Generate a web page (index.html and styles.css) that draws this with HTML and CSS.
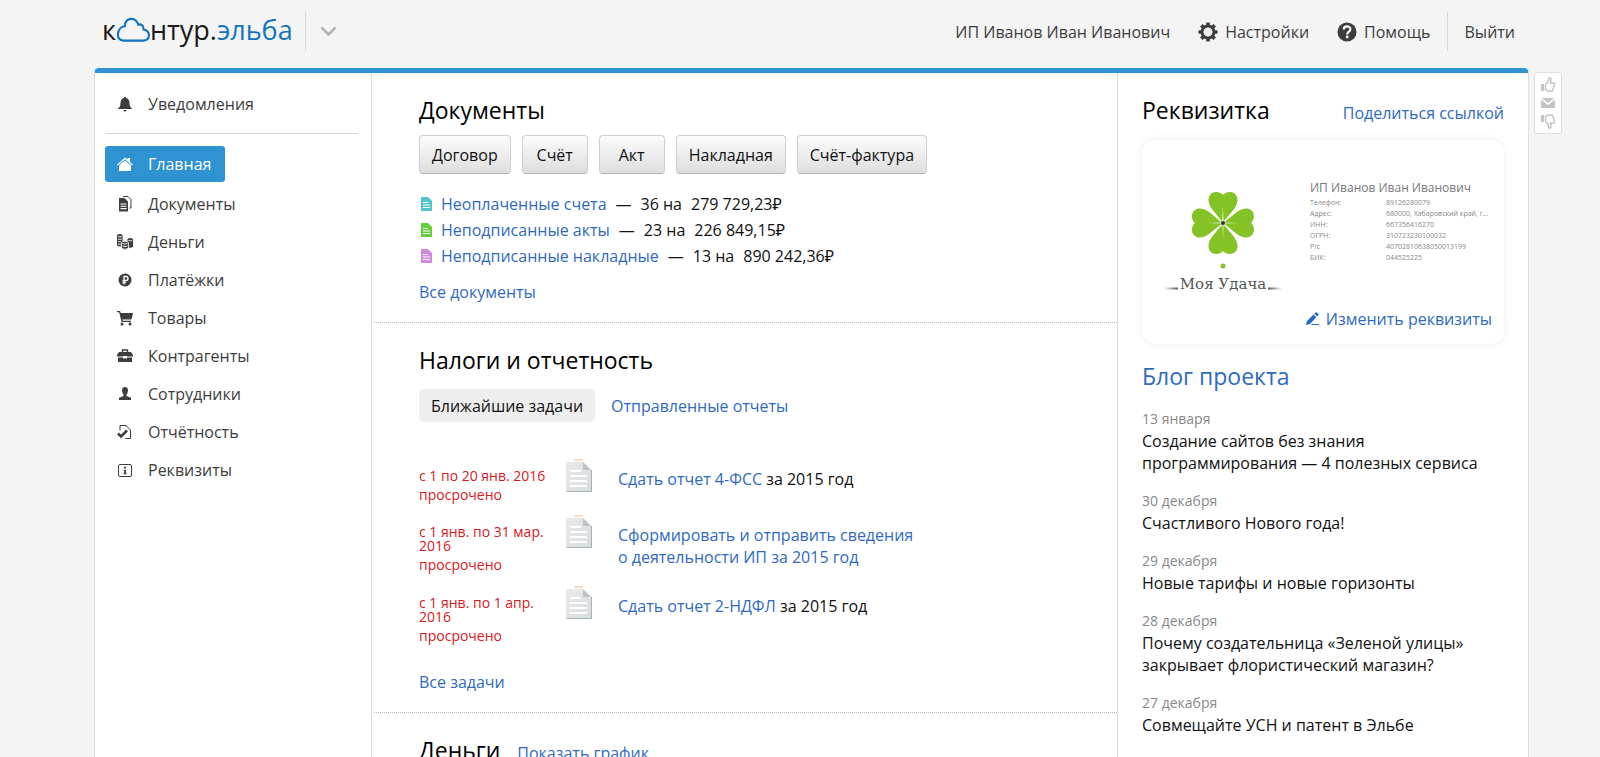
FILE: index.html
```html
<!DOCTYPE html>
<html lang="ru">
<head>
<meta charset="utf-8">
<title>Контур.Эльба</title>
<link rel="stylesheet" href="styles.css">
</head>
<body>
<svg class="defs" aria-hidden="true">
  <symbol id="sheet" viewBox="0 0 11 14"><path d="M0 0h7l4 4v10H0z"/><path d="M2 5.500h5M2 8h7M2 10.500h7" stroke="#fff" stroke-width="1.200"/></symbol>
  <linearGradient id="paper" x1="0" y1="0" x2="1" y2="1"><stop offset="0" stop-color="#e8eaeb"/><stop offset="1" stop-color="#d9dddf"/></linearGradient>
  <symbol id="page" viewBox="0 0 26 34"><path d="M8 1h9" stroke="#f3dccb" stroke-width="2"/><path d="M0 3h17l8 8v21H0z" fill="url(#paper)"/><path d="M.5 32.500h25V11" fill="none" stroke="#a9b2b6" stroke-width="1.200"/><path d="M17 3l8 8h-8z" fill="#bcc4c7"/><path d="M4 12h11M4 17h17M4 22h17M4 27h17" stroke="#fff" stroke-width="2"/></symbol>
  <symbol id="thumb" viewBox="0 0 14 16"><path d="M0 7h3v7H0z" fill="#c4c4c4"/><path d="M4.500 7.500L7 5l1-4q2-.5 2 2l-.5 3H13q.8 1 0 2.500l-1 4-1 1.500H7l-2.500-1.500z" fill="#fff" stroke="#c4c4c4" stroke-width="1.500"/></symbol>
</svg>

<header class="top">
  <a class="logo" href="#"><span>к</span><svg class="cloud" viewBox="0 0 32 24"><path d="M7 22h18.500c7 0 7.500-9 .5-10.500C26 7.500 23.500 6 21 7 18.500-.5 9-.5 8.200 8.500 1 9-1 22 7 22z" fill="none" stroke="#1173c0" stroke-width="2"/></svg><span>нтур.</span><span class="logo-blue">эльба</span></a>
  <button class="services" aria-label="Сервисы"><svg width="17" height="11" viewBox="0 0 17 11"><path d="M1.500 1.500l7 7 7-7" fill="none" stroke="#b3b3b3" stroke-width="2.500"/></svg></button>
  <nav class="account">
    <a href="#">ИП Иванов Иван Иванович</a>
    <a href="#"><svg width="20" height="20" viewBox="0 0 20 20"><circle cx="10" cy="10" r="6" fill="none" stroke="#3d3d3d" stroke-width="3"/><path d="M10 .5v3M10 16.500v3M.5 10h3M16.500 10h3M3.300 3.300l2 2M14.700 14.700l2 2M3.300 16.700l2-2M14.700 5.300l2-2" stroke="#3d3d3d" stroke-width="3.600"/></svg>Настройки</a>
    <a href="#"><svg width="20" height="20" viewBox="0 0 20 20"><circle cx="10" cy="10" r="9.500" fill="#3d3d3d"/><path d="M6.800 7.500c0-4 6.600-4 6.600-.3 0 2.500-3.200 2.300-3.200 5.300" fill="none" stroke="#fff" stroke-width="2.200"/><circle cx="10.200" cy="15" r="1.400" fill="#fff"/></svg>Помощь</a>
    <a class="exit" href="#">Выйти</a>
  </nav>
</header>

<div class="shell">
<div class="panel">
  <nav class="side">
    <div class="side-head"><a href="#"><svg viewBox="0 0 16 16"><path d="M8 1q1.200 0 1.200 1Q12.500 3 12.500 7q0 4 2.500 5.500v.5H1v-.5Q3.500 11 3.500 7q0-4 3.300-5Q6.800 1 8 1zM6.300 14h3.400Q9.500 15.500 8 15.500T6.300 14z"/></svg>Уведомления</a></div>
    <ul>
      <li><a class="current" href="#"><svg viewBox="0 0 16 16"><path d="M8 1.500l2.500 2.300V2H13v4l3 2.700-.8.8L8 3.300.8 9.500 0 8.700z"/><path d="M8 4.600l6 5V15H2V9.600z"/></svg>Главная</a></li>
      <li><a href="#"><svg viewBox="0 0 16 16"><path d="M6 .5h5l3 3V12h-1.500" fill="none" stroke="#3d3d3d"/><path d="M2 2h5.500L11 5.500V15.500H2z"/><path d="M3.500 8h6M3.500 10.300h6M3.500 12.600h6" stroke="#fff" stroke-width="1.100"/></svg>Документы</a></li>
      <li><a href="#"><svg viewBox="0 0 16 16"><path d="M0 1.500Q0 0 2.800 0t2.800 1.500v10q-2.500 2-5.600 0zM10.400 5.500q0-1.500 2.800-1.500T16 5.500v7.500q-2.800 1.500-5.600 0z"/><path d="M4.500 9q0-1.800 3.500-1.800T11.500 9v5.200q-3.500 2.400-7 0z" stroke="#fff" stroke-width=".8"/><path d="M1 2.500q2 .8 3.800 0M1 5q2 .8 3.800 0M1 7.500q2 .8 3 0M1 10q2 .8 3 0M5.500 9.500q2.500 1.200 5 0M5.500 12q2.500 1.200 5 0M11.500 6.500q2 .8 3.500 0" fill="none" stroke="#fff" stroke-width=".9"/></svg>Деньги</a></li>
      <li><a href="#"><svg viewBox="0 0 16 16"><circle cx="8" cy="8" r="6.500"/><path d="M7 12.500V4.500h2q2 0 2 2t-2 2H5.500M5.500 10.500H9" fill="none" stroke="#fff" stroke-width="1.300"/></svg>Платёжки</a></li>
      <li><a href="#"><svg viewBox="0 0 16 16"><path d="M0 1h3l.7 2H16l-1.500 6.500H5.300l.4 1.300H14V12H4.500L2.200 2.300H0z"/><circle cx="5" cy="14" r="1.500"/><circle cx="13" cy="14" r="1.500"/></svg>Товары</a></li>
      <li><a href="#"><svg viewBox="0 0 16 16"><path d="M5.500 4V2h5v2" fill="none" stroke="#3d3d3d" stroke-width="1.400"/><path d="M2 4h12l2 3v1.500H10V8H6v.5H0V7zM1 9.500h5v1h4v-1h5V14H1z"/></svg>Контрагенты</a></li>
      <li><a href="#"><svg viewBox="0 0 16 16"><path d="M8 1q3 0 3 3.500 0 2-1.500 4V10l4.500 1.700V14H2v-2.300L6.500 10V8.500Q5 6.500 5 4.500 5 1 8 1z"/></svg>Сотрудники</a></li>
      <li><a href="#"><svg viewBox="0 0 16 16"><path d="M3 6.500V1.500h6l4.500 4.500v8.500H8.500M9 1.500v1" fill="none" stroke="#3d3d3d"/><path d="M1 9.500l3 3 6-6" fill="none" stroke="#3d3d3d" stroke-width="2.500"/></svg>Отчётность</a></li>
      <li><a href="#"><svg viewBox="0 0 16 16"><rect x="1.500" y="2.500" width="13" height="12" rx="1.500" fill="none" stroke="#3d3d3d"/><path d="M7 4.800h2v1.700H7zM6.500 7.700H9v3.500h.8v1H6.500v-1h.8V8.700h-.8z"/></svg>Реквизиты</a></li>
    </ul>
  </nav>

  <main>
    <section>
      <h2>Документы</h2>
      <div class="buttons"><button>Договор</button><button>Счёт</button><button>Акт</button><button>Накладная</button><button>Счёт-фактура</button></div>
      <ul class="docs">
        <li><svg fill="#53c6cd"><use href="#sheet"/></svg><a href="#">Неоплаченные счета</a><span>—</span><span>36 на</span><span>279 729,23₽</span></li>
        <li><svg fill="#65cf3b"><use href="#sheet"/></svg><a href="#">Неподписанные акты</a><span>—</span><span>23 на</span><span>226 849,15₽</span></li>
        <li><svg fill="#cf8ae0"><use href="#sheet"/></svg><a href="#">Неподписанные накладные</a><span>—</span><span>13 на</span><span>890 242,36₽</span></li>
      </ul>
      <a href="#">Все документы</a>
    </section>
    <section class="taxes">
      <h2>Налоги и отчетность</h2>
      <div class="tabs"><button class="active">Ближайшие задачи</button><button>Отправленные отчеты</button></div>
      <ul class="tasks">
        <li><div class="due"><p>с 1 по 20 янв. 2016</p><p>просрочено</p></div><svg><use href="#page"/></svg><p class="task"><a href="#">Сдать отчет 4-ФСС</a> за 2015 год</p></li>
        <li><div class="due"><p>с 1 янв. по 31 мар. 2016</p><p>просрочено</p></div><svg><use href="#page"/></svg><p class="task"><a href="#">Сформировать и отправить сведения о деятельности ИП за 2015 год</a></p></li>
        <li><div class="due"><p>с 1 янв. по 1 апр. 2016</p><p>просрочено</p></div><svg><use href="#page"/></svg><p class="task"><a href="#">Сдать отчет 2-НДФЛ</a> за 2015 год</p></li>
      </ul>
      <a href="#">Все задачи</a>
    </section>
    <section class="money">
      <h2>Деньги</h2><a href="#">Показать график</a>
    </section>
  </main>

  <aside>
    <div class="aside-head"><h2>Реквизитка</h2><a href="#">Поделиться ссылкой</a></div>
    <div class="card">
      <div class="card-body">
        <svg class="clover" viewBox="0 0 118 104">
          <defs>
            <path id="leaf" d="M59 34C55 25 44.500 19 44.500 10 44.500 1 55 0 59 5 63 0 73.500 1 73.500 10 73.500 19 63 25 59 34z"/>
            <linearGradient id="fade"><stop offset="0" stop-color="#555" stop-opacity="0"/><stop offset="1" stop-color="#555"/></linearGradient>
            <linearGradient id="fade2"><stop offset="0" stop-color="#555"/><stop offset="1" stop-color="#555" stop-opacity="0"/></linearGradient>
          </defs>
          <g fill="#84c225"><use href="#leaf"/><use href="#leaf" transform="rotate(90 59 33)"/><use href="#leaf" transform="rotate(180 59 33)"/><use href="#leaf" transform="rotate(270 59 33)"/><circle cx="59" cy="76" r="2.500"/></g>
          <path d="M58.500 17l.5 14 .5-14v14l6-5-5 6.500 14 .5-14 .5 5 6.500-6-5v14l-.5-14-.5 14V35l-6 5 5-6.500L43 33l14-.5-5-6.500 6 5z" fill="#e9f6d4"/>
          <circle cx="59" cy="33" r="2" fill="#333"/>
          <rect y="97.500" width="14" height="2" fill="url(#fade)"/><rect x="104" y="97.500" width="14" height="2" fill="url(#fade2)"/>
          <text x="59" y="99" text-anchor="middle" class="brand">Моя Удача</text>
        </svg>
        <div class="info">
          <p class="owner">ИП Иванов Иван Иванович</p>
          <dl><dt>Телефон:</dt><dd>89126280079</dd><dt>Адрес:</dt><dd>680000, Хабаровский край, г…</dd><dt>ИНН:</dt><dd>667356416270</dd><dt>ОГРН:</dt><dd>310723230100032</dd><dt>Р/с</dt><dd>40702810638050013199</dd><dt>БИК:</dt><dd>044525225</dd></dl>
        </div>
      </div>
      <a class="edit" href="#"><svg width="14" height="14" viewBox="0 0 14 14" fill="#2268c4"><path d="M0 13l1-4 6.500-6.500 2.800 2.800L4 12zM8.300 1.700L9.700.5q.6-.5 1.200 0L12.300 2q.5.600 0 1.200L11 4.500zM6 12h7v1H5z"/></svg>Изменить реквизиты</a>
    </div>
    <h2><a href="#">Блог проекта</a></h2>
    <ul class="blog">
      <li><time>13 января</time><a href="#">Создание сайтов без знания программирования — 4 полезных сервиса</a></li>
      <li><time>30 декабря</time><a href="#">Счастливого Нового года!</a></li>
      <li><time>29 декабря</time><a href="#">Новые тарифы и новые горизонты</a></li>
      <li><time>28 декабря</time><a href="#">Почему создательница «Зеленой улицы» закрывает флористический магазин?</a></li>
      <li><time>27 декабря</time><a href="#">Совмещайте УСН и патент в Эльбе</a></li>
    </ul>
  </aside>
</div>
<div class="feedback">
  <button aria-label="Нравится"><svg width="16" height="16"><use href="#thumb"/></svg></button>
  <button aria-label="Написать"><svg width="14" height="10" viewBox="0 0 14 10"><path d="M0 0h14v10H0z" fill="#c4c4c4"/><path d="M0 .5l7 5.500 7-5.500" fill="none" stroke="#fff" stroke-width="1.500"/></svg></button>
  <button aria-label="Не нравится"><svg class="down" width="16" height="16"><use href="#thumb"/></svg></button>
</div>
</div>
</body>
</html>
```
FILE: styles.css
```css
* { box-sizing: border-box; }
html { height: 100%; overflow: hidden; }
body {
  height: 100%;
  margin: 0;
  overflow: hidden;
  display: flex;
  flex-direction: column;
  background: #f4f4f4;
  color: #111;
  font: 16px/22px "Open Sans", "Noto Sans", sans-serif;
}
h2, p, ul, dl, dd { margin: 0; padding: 0; }
ul { list-style: none; }
a { color: #2f6abf; text-decoration: none; }
button { margin: 0; padding: 0; border: 0; background: none; font: inherit; color: inherit; cursor: pointer; }
h2 { font-size: 23px; line-height: 32px; font-weight: 400; color: #000; }
svg { flex: none; display: block; }
.defs { position: absolute; width: 0; height: 0; }

.top { flex: none; display: flex; align-items: center; height: 68px; padding: 0 85px 5px 102px; }
.logo { display: flex; align-items: center; padding-bottom: 4px; font-size: 27px; line-height: 36px; color: #1a1a1a; }
.cloud { width: 34px; height: 26px; }
.logo-blue { color: #1173c0; }
.services { display: flex; align-items: center; height: 39px; margin-left: 12px; padding-left: 14px; border-left: 1px solid #d8d8d8; }
.account { display: flex; align-items: center; margin-left: auto; gap: 28px; }
.account a { display: flex; align-items: center; gap: 7px; color: #3d3d3d; }
.account .exit { height: 39px; margin-left: -12px; padding-left: 17px; border-left: 1px solid #d8d8d8; }

.shell { flex: 1; display: flex; align-items: flex-start; min-height: 0; padding: 0 38px 0 94px; gap: 5px; }
.panel {
  flex: 1;
  display: grid;
  grid-template-columns: 277px 1fr 411px;
  min-height: 100%;
  background: #fff;
  border: 1px solid #ddd;
  border-width: 0 1px;
  border-top: 5px solid #2f93d1;
  border-radius: 5px 5px 0 0;
}

.side { padding: 13px 13px 0 10px; border-right: 1px solid #ddd; }
.side a { display: inline-flex; align-items: center; gap: 15px; height: 36px; padding: 0 14px 0 12px; border-radius: 3px; color: #3d3d3d; fill: #3d3d3d; }
.side svg { width: 16px; height: 16px; }
.side-head { height: 48px; border-bottom: 1px solid #d5d5d5; }
.side ul { display: grid; gap: 2px; padding-top: 12px; }
.side li { height: 36px; }
.side li:first-child { height: 38px; }
.side a.current { background: #2f93d1; color: #fff; fill: #fff; }

section { padding: 21px 45px 19px; margin: 0 0 0 2px; border-bottom: 1px dotted #bbb; }
.buttons { display: flex; gap: 11px; margin: 9px 0 19px; }
.buttons button {
  min-width: 66px;
  height: 39px;
  padding: 0 12px;
  border: 1px solid #d0d0d0;
  border-bottom-color: #b5b5b5;
  border-radius: 4px;
  background: linear-gradient(#fcfcfc, #dedede);
}
.docs { display: grid; gap: 4px; margin-bottom: 14px; }
.docs li { display: flex; align-items: center; }
.docs svg { width: 11px; height: 14px; margin: 0 9px 0 2px; }
.docs span { margin-left: 9px; }
.tabs { display: flex; gap: 4px; margin: 13px 0 37px; }
.tabs button { height: 33px; padding: 0 12px; border-radius: 5px; color: #2f6abf; }
.tabs .active { background: #eee; color: #111; }
.tasks { margin-bottom: 28px; }
.tasks li { display: grid; grid-template-columns: 130px 26px 310px; column-gap: 17px; align-items: start; min-height: 56px; margin-bottom: 14px; }
.tasks li:first-child { margin-bottom: 0; }
.tasks svg { width: 26px; height: 34px; }
.due { padding-top: 10px; font-size: 14px; line-height: 14px; color: #d9171e; }
.due p + p { margin-top: 5px; }
.task { padding: 9px 0 0 9px; }
.money { display: flex; align-items: baseline; gap: 17px; border: 0; }

aside { padding: 21px 24px 0; border-left: 1px solid #ddd; }
.aside-head { display: flex; justify-content: space-between; align-items: baseline; }
.card { margin: 14px 0 16px; padding: 41px 12px 14px 22px; border-radius: 14px; box-shadow: 0 0 8px rgba(0, 0, 0, .08); }
.card-body { display: flex; gap: 28px; margin-bottom: 6px; height: 121px; }
.clover { width: 118px; height: 104px; margin-top: 9px; }
.brand { font: 15px "DejaVu Serif", serif; fill: #555; }
.info { flex: 1; min-width: 0; color: #777; }
.owner { font-size: 12px; line-height: 14px; margin-bottom: 2px; }
dl { display: grid; grid-template-columns: 76px 1fr; font-size: 7px; line-height: 11px; color: #888; }
dd { white-space: nowrap; }
.edit { display: flex; justify-content: flex-end; align-items: center; gap: 6px; }
.blog { display: grid; gap: 16px; margin-top: 16px; }
.blog time { display: block; font-size: 14px; color: #888; }
.blog a { display: block; color: #111; }

.feedback { display: flex; flex-direction: column; align-items: center; justify-content: space-between; width: 28px; height: 62px; margin-top: 4px; padding: 4px; background: #fff; border: 1px solid #ddd; border-radius: 3px; }
.down { transform: scaleY(-1); }
```
